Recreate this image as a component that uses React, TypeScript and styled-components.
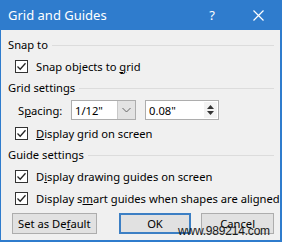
import React from 'react';
import styled, { createGlobalStyle } from 'styled-components';

const GlobalStyle = createGlobalStyle`
  html, body {
    margin: 0;
    padding: 0;
    background: #ffffff;
  }
  body {
    font-family: "Noto Sans", "Open Sans", sans-serif;
  }
`;

const Window = styled.div`
  position: relative;
  width: 282px;
  height: 242px;
  background: #2f7ccd;
  display: flex;
  flex-direction: column;
  overflow: hidden;
`;

const TitleBar = styled.div`
  height: 30px;
  display: flex;
  align-items: center;
  padding: 0 0 0 8px;
  color: #ffffff;
  font-size: 13px;
`;

const Title = styled.div`
  flex: 1;
`;

const TitleButton = styled.div<{ $w: number; $mr?: number }>`
  width: ${(p) => p.$w}px;
  margin-right: ${(p) => p.$mr ?? 0}px;
  display: flex;
  justify-content: center;
  align-items: center;
  color: #ffffff;
  font-size: 13px;
`;

const Body = styled.div`
  flex: 1;
  margin: 0 2px 2px 1px;
  background: #f0f0f0;
  padding: 7px 6px 0 7px;
  display: flex;
  flex-direction: column;
  font-size: 11.2px;
  color: #000000;
`;

const GroupHeader = styled.div<{ $mt: number }>`
  height: 16px;
  margin-top: ${(p) => p.$mt}px;
  display: flex;
  align-items: center;
  gap: 4px;
  line-height: 16px;
  &::after {
    content: '';
    flex: 1;
    height: 1px;
    background: #dcdcdc;
    margin-top: 1px;
  }
`;

const CheckRow = styled.label<{ $mt: number }>`
  height: 20px;
  margin-top: ${(p) => p.$mt}px;
  padding-left: 7px;
  display: flex;
  align-items: center;
  gap: 8px;
  white-space: nowrap;
`;

const Box = styled.span`
  width: 11px;
  height: 11px;
  border: 1px solid #333333;
  background: #ffffff;
  display: flex;
  align-items: center;
  justify-content: center;
  flex: none;
`;

const Key = styled.span`
  text-decoration: underline;
`;

const SpacingRow = styled.div`
  height: 20px;
  margin-top: 4px;
  padding-left: 10px;
  display: flex;
  align-items: center;
`;

const SpacingLabel = styled.span`
  width: 53px;
`;

const Combo = styled.div`
  width: 60px;
  height: 18px;
  border: 1px solid #adadad;
  background: #ffffff;
  display: flex;
  align-items: center;
  padding-left: 3px;
`;

const ComboText = styled.span`
  flex: 1;
`;

const DropButton = styled.div`
  width: 17px;
  height: 18px;
  background: #e3e3e3;
  border-left: 1px solid #c8c8c8;
  display: flex;
  align-items: center;
  justify-content: center;
`;

const Spin = styled.div`
  width: 69px;
  height: 18px;
  margin-left: 9px;
  border: 1px solid #adadad;
  background: #ffffff;
  display: flex;
  align-items: center;
  padding-left: 3px;
`;

const SpinButtons = styled.div`
  width: 13px;
  height: 16px;
  margin-right: 1px;
  display: flex;
  flex-direction: column;
  align-items: center;
  justify-content: center;
  gap: 2px;
  background: #f3f3f3;
`;

const ButtonRow = styled.div`
  margin-top: 5px;
  display: flex;
  align-items: center;
`;

const Button = styled.div<{ $w: number; $ml: number; $default?: boolean }>`
  width: ${(p) => p.$w}px;
  height: 21px;
  margin-left: ${(p) => p.$ml}px;
  box-sizing: border-box;
  background: #e1e1e1;
  border: ${(p) => (p.$default ? '2px solid #3c7fc4' : '1px solid #adadad')};
  display: flex;
  align-items: center;
  justify-content: center;
`;

const Watermark = styled.div`
  position: absolute;
  left: 178px;
  top: 224px;
  font-family: "Liberation Sans", Arial, sans-serif;
  font-size: 12px;
  color: #1a1a1a;
  letter-spacing: -0.2px;
`;

const Check = () => (
  <svg width="11" height="11" viewBox="0 0 11 11">
    <path d="M1.5 5.5 L4.2 8.2 L9.5 2.2" fill="none" stroke="#222" strokeWidth="1.3" />
  </svg>
);

const CheckItem: React.FC<{ mt: number; children: React.ReactNode }> = ({ mt, children }) => (
  <CheckRow $mt={mt}>
    <Box>
      <Check />
    </Box>
    <span>{children}</span>
  </CheckRow>
);

export default function App() {
  return (
    <>
      <GlobalStyle />
      <Window>
        <TitleBar>
          <Title>Grid and Guides</Title>
          <TitleButton $w={20} $mr={12}>?</TitleButton>
          <TitleButton $w={48}>
            <svg width="11" height="11" viewBox="0 0 11 11">
              <path d="M0.5 0.5 L10.5 10.5 M10.5 0.5 L0.5 10.5" stroke="#fff" strokeWidth="1.2" />
            </svg>
          </TitleButton>
        </TitleBar>
        <Body>
          <GroupHeader $mt={0}>Snap to</GroupHeader>
          <CheckItem mt={3}>
            Snap objects to <Key>g</Key>rid
          </CheckItem>
          <GroupHeader $mt={4}>Grid settings</GroupHeader>
          <SpacingRow>
            <SpacingLabel>
              S<Key>p</Key>acing:
            </SpacingLabel>
            <Combo>
              <ComboText>1/12"</ComboText>
              <DropButton>
                <svg width="9" height="6" viewBox="0 0 9 6">
                  <path d="M0.5 1 L4.5 5 L8.5 1" fill="none" stroke="#666" strokeWidth="1" />
                </svg>
              </DropButton>
            </Combo>
            <Spin>
              <ComboText>0.08"</ComboText>
              <SpinButtons>
                <svg width="7" height="4" viewBox="0 0 7 4">
                  <path d="M0 4 L3.5 0 L7 4 Z" fill="#333" />
                </svg>
                <svg width="7" height="4" viewBox="0 0 7 4">
                  <path d="M0 0 L3.5 4 L7 0 Z" fill="#333" />
                </svg>
              </SpinButtons>
            </Spin>
          </SpacingRow>
          <CheckItem mt={3}>
            <Key>D</Key>isplay grid on screen
          </CheckItem>
          <GroupHeader $mt={4}>Guide settings</GroupHeader>
          <CheckItem mt={3}>
            D<Key>i</Key>splay drawing guides on screen
          </CheckItem>
          <CheckItem mt={2}>
            Display s<Key>m</Key>art guides when shapes are aligned
          </CheckItem>
          <ButtonRow>
            <Button $w={85} $ml={4}>
              Set as De<Key>f</Key>ault
            </Button>
            <Button $w={73} $ml={22} $default>
              OK
            </Button>
            <Button $w={73} $ml={10}>
              Cancel
            </Button>
          </ButtonRow>
        </Body>
        <Watermark>www.989214.com</Watermark>
      </Window>
    </>
  );
}
